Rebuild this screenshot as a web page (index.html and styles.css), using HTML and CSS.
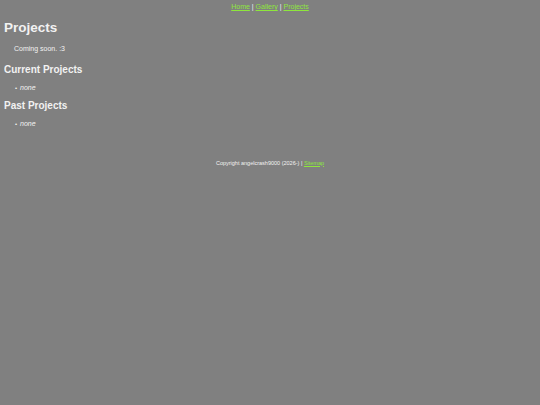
FILE: index.html
```
<!DOCTYPE html>
<html>
<head>
<meta charset="utf-8">
<link rel="stylesheet" href="styles.css">
</head>
<body>
<nav class="nav"><a href="#">Home</a> | <a href="#">Gallery</a> | <a href="#">Projects</a></nav>
<h1 class="title">Projects</h1>
<p class="intro">Coming soon. :3</p>
<h2 class="sub">Current Projects</h2>
<ul class="list"><li><em>none</em></li></ul>
<h2 class="sub">Past Projects</h2>
<ul class="list"><li><em>none</em></li></ul>
<footer class="foot">Copyright angelcrash9000 (2026-) | <a href="#">Sitemap</a></footer>
</body>
</html>
```
FILE: styles.css
```
html { background: #808080; }
body {
  margin: 3px 4px;
  font-family: "Liberation Sans", Arial, sans-serif;
  font-size: 7px;
  line-height: 8px;
  color: #f2f2f2;
}
a { color: #8ee63c; text-decoration: underline; text-decoration-thickness: 0.5px; }
.nav { text-align: center; }
.title { font-size: 13.5px; line-height: 15px; margin: 8.5px 0 0; }
.intro { margin: 10.5px 0 0 10px; }
.sub { font-size: 10px; line-height: 12px; margin: 11px 0 0; }
.sub + .list { margin-top: 8px; }
.list { margin: 8px 0 0; padding-left: 16px; list-style: none; }
.list li::before { content: "\2022"; display: inline-block; width: 5px; margin-left: -5px; font-size: 6px; }
.list + .sub { margin-top: 8px; }
.foot { text-align: center; margin-top: 31.5px; font-size: 5.5px; line-height: 7px; }
```
